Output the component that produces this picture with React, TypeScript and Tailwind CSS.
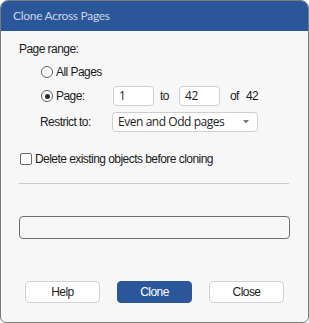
import React from "react";

const ui = "font-['Liberation_Sans',Arial,sans-serif] tracking-[-0.55px]";
const segoe = "font-['Open_Sans',sans-serif] tracking-[-0.45px]";

const Radio: React.FC<{ checked?: boolean }> = ({ checked }) => (
  <span className="w-[12px] h-[12px] rounded-full border border-[#5f5f5f] bg-white flex items-center justify-center shrink-0">
    {checked && <span className="w-[5px] h-[5px] rounded-full bg-[#2a2a2a]" />}
  </span>
);

const Field: React.FC<{ value: string; className?: string; children?: React.ReactNode }> = ({
  value,
  className,
  children,
}) => (
  <div
    className={`h-[20px] rounded-[4px] border border-[#cfcfcf] bg-white flex items-center px-[5px] text-[12px] text-[#222] ${segoe} ${className ?? ""}`}
  >
    <span>{value}</span>
    {children}
  </div>
);

const Button: React.FC<{ label: string; primary?: boolean }> = ({ label, primary }) => (
  <button
    className={`w-[75px] h-[22px] rounded-[4px] flex items-center justify-center text-[12px] ${
      primary ? "bg-[#2b579a] text-white border border-[#2b579a]" : "bg-white text-[#222] border border-[#d2d2d2]"
    }`}
  >
    {label}
  </button>
);

export default function App() {
  return (
    <div
      className={`w-[309px] h-[323px] flex flex-col bg-[#f7f7f7] border border-[#7a7a7a] rounded-t-[8px] rounded-b-[6px] overflow-hidden text-[#1a1a1a] ${ui}`}
    >
      <div className="h-[30px] bg-[#2b579a] flex items-center px-[12px] shrink-0">
        <span className="text-[12px] text-[#c9d4e6] font-['Lato',sans-serif] tracking-[-0.3px]">Clone Across Pages</span>
      </div>

      <div className="flex-1 flex flex-col px-[18px] text-[12px]">
        <div className="mt-[10px] h-[16px] leading-[16px]">Page range:</div>

        <div className="mt-[5px] h-[20px] flex items-center pl-[22px] gap-[3px]">
          <Radio />
          <span>All Pages</span>
        </div>

        <div className="mt-[4px] h-[20px] flex items-center pl-[22px]">
          <Radio checked />
          <span className="ml-[3px] w-[57px]">Page:</span>
          <Field value="1" className="w-[41px]" />
          <span className="ml-[6px] w-[19px]">to</span>
          <Field value="42" className="w-[41px]" />
          <span className="ml-[10px]">of</span>
          <span className="ml-[7px]">42</span>
        </div>

        <div className="mt-[6px] h-[20px] flex items-center pl-[21px]">
          <span className="w-[72px]">Restrict to:</span>
          <Field value="Even and Odd pages" className="w-[146px] justify-between pr-[8px]">
            <svg width="6" height="4" viewBox="0 0 6 4">
              <path d="M0 0h6L3 3.5z" fill="#7a7a7a" />
            </svg>
          </Field>
        </div>

        <div className="mt-[19px] h-[16px] flex items-center gap-[3px] pl-[1px]">
          <span className="w-[12px] h-[12px] rounded-[2px] border border-[#6a6a6a] bg-white shrink-0" />
          <span>Delete existing objects before cloning</span>
        </div>

        <div className="mt-[16px] h-px bg-[#cbcbcb] mr-[1px]" />

        <div className="mt-[32px] h-[23px] rounded-[4px] border border-[#6e6e6e] bg-[#f7f7f7]" />

        <div className="mt-[42px] flex items-center justify-between px-[6px]">
          <Button label="Help" />
          <Button label="Clone" primary />
          <Button label="Close" />
        </div>
      </div>
    </div>
  );
}
